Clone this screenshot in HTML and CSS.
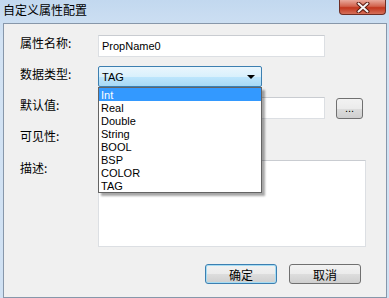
FILE: index.html
```html
<!DOCTYPE html>
<html>

<head>
    <title>自定义属性配置</title>
    <link rel="stylesheet" href="styles.css">
</head>

<body>
    <div class="window">
        <div class="titlebar">
            <span class="title">自定义属性配置</span>
            <div class="close">
                <svg width="14" height="11" viewBox="0 0 14 11">
                    <path d="M2.5 1.5 L11.5 9.5 M11.5 1.5 L2.5 9.5" stroke="#5a1a10" stroke-width="4" stroke-linecap="round" />
                    <path d="M2.5 1.5 L11.5 9.5 M11.5 1.5 L2.5 9.5" stroke="#f4f4f4" stroke-width="2" stroke-linecap="round" />
                </svg>
            </div>
        </div>

        <div class="client">
            <div class="row row-name">
                <span class="label">属性名称:</span>
                <div class="textbox name-box">PropName0</div>
            </div>

            <div class="row row-type">
                <span class="label">数据类型:</span>
                <div class="combo-wrap">
                    <div class="combo">
                        <span>TAG</span>
                        <span class="arrow"></span>
                    </div>
                    <ul class="droplist">
                        <li class="selected">Int</li>
                        <li>Real</li>
                        <li>Double</li>
                        <li>String</li>
                        <li>BOOL</li>
                        <li>BSP</li>
                        <li>COLOR</li>
                        <li>TAG</li>
                    </ul>
                </div>
            </div>

            <div class="row row-default">
                <span class="label">默认值:</span>
                <div class="textbox default-box"></div>
                <div class="btn dots">...</div>
            </div>

            <div class="row row-visible">
                <span class="label">可见性:</span>
            </div>

            <div class="row row-desc">
                <span class="label">描述:</span>
                <div class="textbox desc-box"></div>
            </div>

            <div class="buttons">
                <div class="btn btn-ok">确定</div>
                <div class="btn btn-cancel">取消</div>
            </div>
        </div>
    </div>
</body>

</html>
```

FILE: styles.css
```css
body {
    margin: 0;
    background-color: #c9dcf0;
    font-family: "Noto Sans CJK SC", "Liberation Sans", sans-serif;
    font-size: 12px;
    color: #000000;
}

.window {
    width: 389px;
    height: 298px;
    background: linear-gradient(#c2d8ef, #d3e3f4 40px, #d0e1f3);
    display: flex;
    flex-direction: column;
}

.titlebar {
    height: 24px;
    display: flex;
    align-items: flex-start;
    justify-content: space-between;
}

.title {
    margin-left: 3px;
    margin-top: 3px;
    line-height: 14px;
}

.close {
    width: 45px;
    height: 14px;
    margin-right: 3px;
    margin-left: auto;
    border: 1px solid #6e2e24;
    border-top: none;
    border-radius: 0 0 4px 4px;
    background: linear-gradient(#e9a99c, #d2634d 45%, #c2361d 55%, #d5705a);
    display: flex;
    align-items: center;
    justify-content: center;
}

.client {
    margin: 0 2px 0 3px;
    height: 268px;
    border: 1px solid #8797aa;
    background-color: #f0f0f0;
    padding: 11px 0 0 16px;
    display: flex;
    flex-direction: column;
}

.row {
    display: flex;
    align-items: flex-start;
}

.row > * {
    flex-shrink: 0;
}

.label {
    width: 78px;
    line-height: 14px;
    margin-top: 1px;
}

.textbox {
    box-sizing: border-box;
    background-color: #ffffff;
    border: 1px solid #dcdfe3;
    border-top-color: #c9ccd1;
    font-family: "Liberation Sans", sans-serif;
    font-size: 11px;
    padding: 4px 3px;
}

.name-box {
    width: 227px;
    height: 22px;
}

.row-type {
    margin-top: 9px;
}

.combo-wrap {
    position: relative;
}

.combo {
    box-sizing: border-box;
    width: 164px;
    height: 21px;
    border: 1px solid #3c7fb1;
    border-radius: 2px;
    background: linear-gradient(#eaf6fd, #d9f0fc 50%, #bee6fd 50%, #a7d9f5);
    display: flex;
    align-items: center;
    justify-content: space-between;
    padding: 0 6px 0 3px;
    font-family: "Liberation Sans", sans-serif;
    font-size: 11px;
}

.arrow {
    width: 0;
    height: 0;
    border-left: 4px solid transparent;
    border-right: 4px solid transparent;
    border-top: 4px solid #000000;
}

.droplist {
    position: absolute;
    top: 21px;
    left: 0;
    width: 164px;
    box-sizing: border-box;
    margin: 0;
    padding: 0;
    list-style: none;
    background-color: #ffffff;
    border: 1px solid #646464;
    box-shadow: 3px 3px 2px rgba(0, 0, 0, 0.35);
    font-family: "Liberation Sans", sans-serif;
    font-size: 11px;
    z-index: 2;
}

.droplist li {
    height: 13px;
    line-height: 14px;
    padding-left: 2px;
}

.droplist .selected {
    background-color: #3399ff;
    color: #ffffff;
}

.row-default {
    margin-top: 10px;
}

.default-box {
    width: 227px;
    height: 22px;
}

.btn {
    box-sizing: border-box;
    border: 1px solid #707070;
    border-radius: 3px;
    background: linear-gradient(#f2f2f2, #ebebeb 50%, #dddddd 50%, #cfcfcf);
    display: flex;
    align-items: center;
    justify-content: center;
}

.dots {
    width: 27px;
    height: 21px;
    margin-left: 11px;
    margin-top: 1px;
    font-family: "Liberation Sans", sans-serif;
    font-size: 11px;
    padding-bottom: 2px;
}

.row-visible {
    margin-top: 9px;
    height: 22px;
}

.row-desc {
    margin-top: 10px;
}

.desc-box {
    width: 268px;
    height: 87px;
}

.buttons {
    display: flex;
    justify-content: flex-end;
    gap: 12px;
    margin-top: 17px;
    margin-right: 25px;
}

.btn-ok,
.btn-cancel {
    width: 72px;
    height: 20px;
    font-size: 12px;
}

.btn-ok {
    border-color: #3c7fb1;
    box-shadow: inset 0 0 0 1px #a6dcf3;
}
```
